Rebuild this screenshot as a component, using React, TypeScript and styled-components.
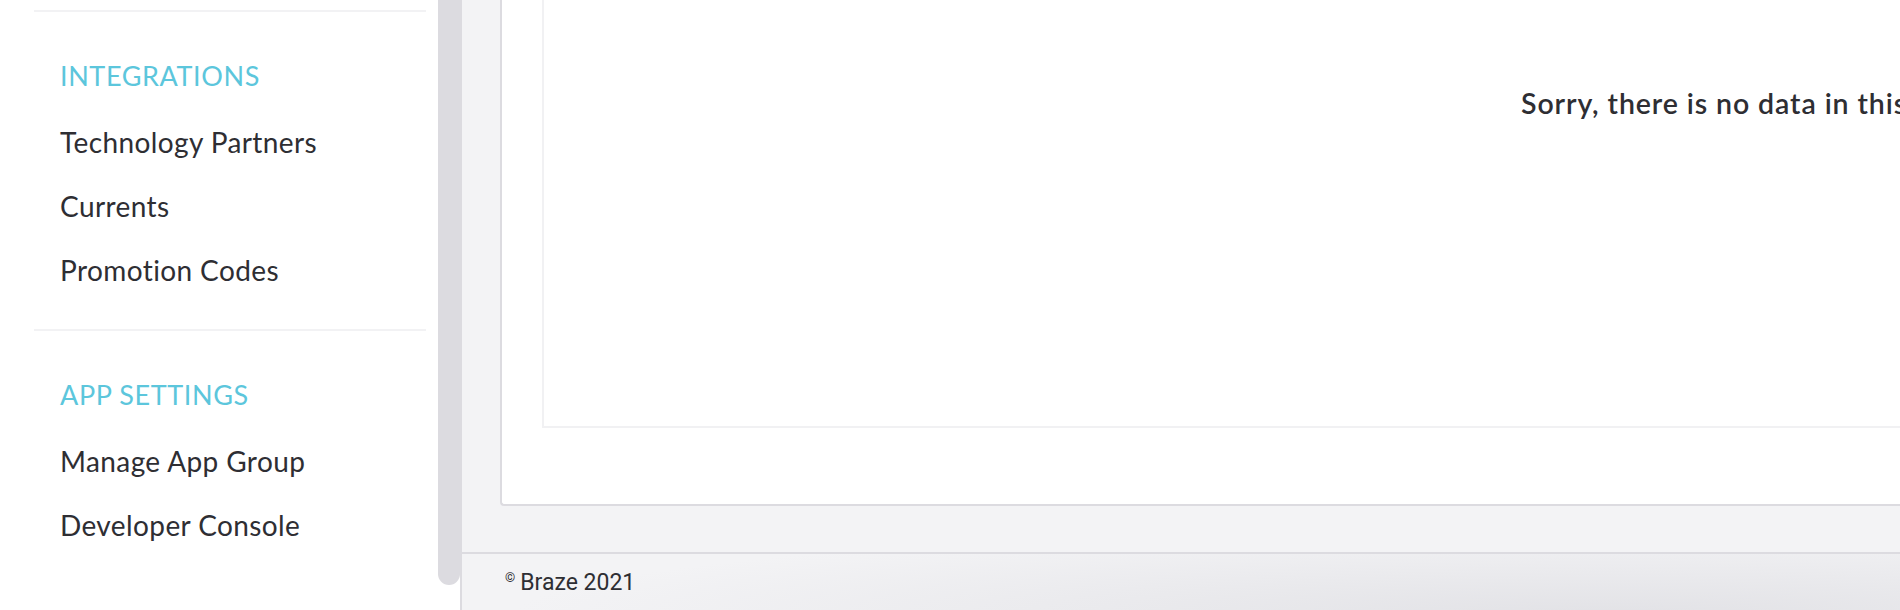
import styled, { createGlobalStyle } from "styled-components";

const GlobalStyle = createGlobalStyle`
  html, body {
    margin: 0;
    padding: 0;
    height: 610px;
    overflow: hidden;
    background: #ffffff;
  }`;

const Page = styled.div`
  display: flex;
  width: 1900px;
  height: 610px;
  overflow: hidden;
  font-family: Lato, "Open Sans", sans-serif;
  color: #2e2e33;`;

const Sidebar = styled.nav`
  width: 392px;
  flex-shrink: 0;
  padding: 10px 12px 0 34px;
  background: #ffffff;`;

const Section = styled.div`
  border-top: 2px solid #f2f2f4;
  padding: 48px 0 27px 26px;`;

const SectionTitle = styled.div`
  font-size: 27px;
  line-height: 32px;
  letter-spacing: 0.6px;
  color: #5cc6dc;
  margin-bottom: 18px;`;

const NavItem = styled.a`
  display: block;
  font-size: 28px;
  line-height: 64px;
  color: #2e2e33;
  text-decoration: none;
  letter-spacing: 0.4px;`;

const ScrollTrack = styled.div`
  width: 22px;
  flex-shrink: 0;
  background: #ffffff;
  border-right: 2px solid #dcdbe0;`;

const ScrollThumb = styled.div`
  height: 585px;
  background: #dcdbe0;
  border-radius: 0 0 11px 11px;`;

const Main = styled.main`
  flex: 1;
  display: flex;
  flex-direction: column;
  min-width: 0;
  background: #f3f3f5;`;

const Content = styled.div`
  flex: 1;
  display: flex;
  padding: 0 0 46px 38px;
  overflow: hidden;`;

const Card = styled.section`
  width: 1600px;
  flex-shrink: 0;
  display: flex;
  flex-direction: column;
  padding: 0 0 76px 40px;
  background: #ffffff;
  border-left: 2px solid #dcdbe0;
  border-bottom: 2px solid #dcdbe0;
  border-bottom-left-radius: 4px;`;

const ChartBox = styled.div`
  flex: 1;
  border-left: 2px solid #f1f1f3;
  border-bottom: 2px solid #f1f1f3;`;

const EmptyMessage = styled.p`
  margin: 0;
  padding: 77px 0 0 977px;
  font-size: 28.5px;
  line-height: 52px;
  font-weight: 600;
  letter-spacing: 0.9px;
  white-space: nowrap;
  color: #2e2e33;`;

const Footer = styled.footer`
  height: 56px;
  flex-shrink: 0;
  display: flex;
  align-items: center;
  padding-left: 43px;
  border-top: 2px solid #dcdbe0;
  background:
    radial-gradient(ellipse 1100px 90px at 1150px 110%, #e2e2e6 0%, rgba(226, 226, 230, 0) 100%),
    #f3f3f5;
  font-family: Roboto, "Liberation Sans", sans-serif;
  font-size: 23px;
  color: #2e2e33;`;

const Copy = styled.span`
  font-size: 13px;
  align-self: flex-start;
  margin: 16px 5px 0 0;`;

const sections = [
  { title: "INTEGRATIONS", items: ["Technology Partners", "Currents", "Promotion Codes"] },
  { title: "APP SETTINGS", items: ["Manage App Group", "Developer Console"] },
];

export default function App() {
  return (
    <>
      <GlobalStyle />
      <Page>
        <Sidebar>
          {sections.map((section) => (
            <Section key={section.title}>
              <SectionTitle>{section.title}</SectionTitle>
              {section.items.map((item) => (
                <NavItem key={item} href="#">{item}</NavItem>
              ))}
            </Section>
          ))}
        </Sidebar>
        <ScrollTrack>
          <ScrollThumb />
        </ScrollTrack>
        <Main>
          <Content>
            <Card>
              <ChartBox>
                <EmptyMessage>Sorry, there is no data in this time range.</EmptyMessage>
              </ChartBox>
            </Card>
          </Content>
          <Footer>
            <Copy>©</Copy>
            Braze 2021
          </Footer>
        </Main>
      </Page>
    </>
  );
}
